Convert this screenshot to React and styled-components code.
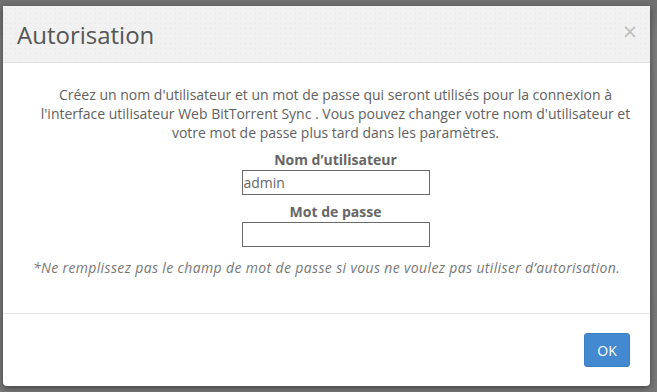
import React from "react";
import styled, { createGlobalStyle } from "styled-components";

const Global = createGlobalStyle`
  html, body { margin: 0; padding: 0; }
  body {
    background: #767676;
    font-family: "Open Sans", "Noto Sans", sans-serif;
    width: 657px;
    height: 392px;
    overflow: hidden;
  }
`;

const Overlay = styled.div`
  width: 657px;
  height: 392px;
  box-sizing: border-box;
  padding: 6px 0 0 3px;
  background: linear-gradient(#6e6e6e, #7a7a7a 40px, #777 100%);
`;

const Modal = styled.div`
  width: 647px;
  height: 380px;
  background: #fff;
  border-radius: 0 0 4px 4px;
  box-shadow: 0 2px 6px rgba(0, 0, 0, 0.45);
  display: flex;
  flex-direction: column;
  overflow: hidden;
`;

const Header = styled.div`
  height: 57px;
  box-sizing: border-box;
  border-bottom: 1px solid #e0e0e0;
  background-color: #f1f1f1;
  background-image: radial-gradient(circle, #e4e4e4 0.7px, transparent 1px);
  background-size: 5px 5px;
  display: flex;
  align-items: center;
  justify-content: space-between;
  padding: 2px 12px 0 14px;
`;

const Title = styled.h3`
  margin: 0;
  font-size: 24px;
  font-weight: 400;
  color: #555;
  line-height: 30px;
`;

const Close = styled.button`
  border: 0;
  background: none;
  padding: 0;
  color: #bdbdbd;
  font-size: 19px;
  line-height: 1;
  font-family: "DejaVu Sans", sans-serif;
  cursor: pointer;
  margin-top: -8px;
`;

const Body = styled.div`
  height: 251px;
  box-sizing: border-box;
  border-bottom: 1px solid #e5e5e5;
  padding: 22px 2px 0 20px;
  display: flex;
  flex-direction: column;
  align-items: center;
  text-align: center;
  color: #616161;
`;

const Intro = styled.p`
  margin: 0 0 8px;
  font-size: 14px;
  line-height: 19px;
  width: 600px;
`;

const Field = styled.div`
  display: flex;
  flex-direction: column;
  align-items: center;
  margin-bottom: ${(p) => p.$gap || 0}px;
`;

const Label = styled.label`
  font-size: 14px;
  font-weight: 700;
  line-height: 19px;
  color: #666;
`;

const Input = styled.input`
  width: 188px;
  height: 25px;
  box-sizing: border-box;
  border: 1px solid #6a6a6a;
  padding: 0 1px;
  font-family: "Open Sans", sans-serif;
  font-size: 14px;
  color: #666;
  outline: none;
  margin-top: 1px;
`;

const Note = styled.p`
  margin: 11px 0 0 -18px;
  font-size: 14px;
  font-style: italic;
  letter-spacing: 0.36px;
  color: #777;
  line-height: 19px;
  white-space: nowrap;
`;

const Footer = styled.div`
  flex: 1;
  display: flex;
  justify-content: flex-end;
  align-items: flex-start;
  padding: 19px 20px 0;
`;

const Button = styled.button`
  width: 46px;
  height: 34px;
  border: 1px solid #3a80c4;
  border-radius: 3px;
  background: #4289cf;
  color: #fff;
  font-family: "Open Sans", sans-serif;
  font-size: 14px;
  cursor: pointer;
`;

export default function App() {
  return (
    <>
      <Global />
      <Overlay>
        <Modal>
          <Header>
            <Title>Autorisation</Title>
            <Close>×</Close>
          </Header>
          <Body>
            <Intro>
              Créez un nom d'utilisateur et un mot de passe qui seront utilisés pour la connexion à
              l'interface utilisateur Web BitTorrent Sync . Vous pouvez changer votre nom d'utilisateur et
              votre mot de passe plus tard dans les paramètres.
            </Intro>
            <Field $gap={7}>
              <Label>Nom d’utilisateur</Label>
              <Input defaultValue="admin" />
            </Field>
            <Field>
              <Label>Mot de passe</Label>
              <Input type="password" />
            </Field>
            <Note>
              *Ne remplissez pas le champ de mot de passe si vous ne voulez pas utiliser d’autorisation.
            </Note>
          </Body>
          <Footer>
            <Button>OK</Button>
          </Footer>
        </Modal>
      </Overlay>
    </>
  );
}
